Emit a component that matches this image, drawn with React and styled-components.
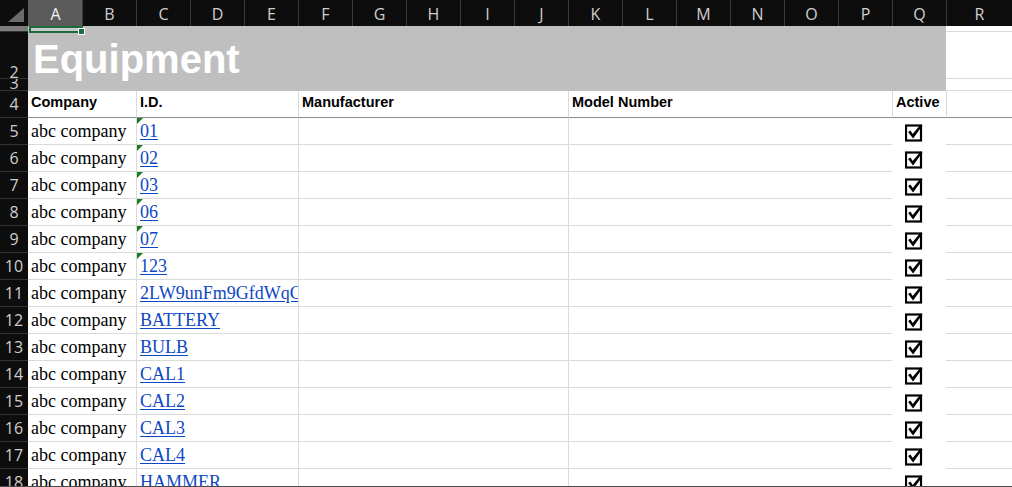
import React from 'react';
import styled, { createGlobalStyle, css } from 'styled-components';

const Global = createGlobalStyle`
  html, body { margin: 0; padding: 0; background: #ffffff; }
  body { overflow: hidden; }
`;

const COLS = ['A','B','C','D','E','F','G','H','I','J','K','L','M','N','O','P','Q','R'];

const ROWS = [
  { n: 5, id: '01', tri: true },
  { n: 6, id: '02', tri: true },
  { n: 7, id: '03', tri: true },
  { n: 8, id: '06', tri: true },
  { n: 9, id: '07', tri: true },
  { n: 10, id: '123', tri: true },
  { n: 11, id: '2LW9unFm9GfdWqCx4Tz', tri: false },
  { n: 12, id: 'BATTERY', tri: false },
  { n: 13, id: 'BULB', tri: false },
  { n: 14, id: 'CAL1', tri: false },
  { n: 15, id: 'CAL2', tri: false },
  { n: 16, id: 'CAL3', tri: false },
  { n: 17, id: 'CAL4', tri: false },
  { n: 18, id: 'HAMMER', tri: false },
];

const columns = css`
  display: grid;
  grid-template-columns: 28px repeat(17, 54px) 66px;
`;

const Sheet = styled.div`
  width: 1012px;
  height: 487px;
  box-sizing: border-box;
  border-bottom: 1px solid #4a4a4a;
  overflow: hidden;
  display: flex;
  flex-direction: column;
  background: #ffffff;
`;

/* ---------- column header bar ---------- */
const HeaderBar = styled.div`
  ${columns};
  flex: 0 0 26px;
  background: #0d0d0d;
`;

const Corner = styled.div`
  display: flex;
  align-items: flex-end;
  justify-content: flex-end;
  padding: 0 4px 4px 0;
  box-sizing: border-box;
`;

const ColHead = styled.div`
  background: ${p => (p.$active ? '#5b5b5b' : '#0d0d0d')};
  color: ${p => (p.$active ? '#f2f2f2' : '#cfcfcf')};
  border-left: 1px solid ${p => (p.$active ? '#5b5b5b' : '#3a3a3a')};
  box-sizing: border-box;
  font-family: "Open Sans", "Noto Sans", sans-serif;
  font-size: 16px;
  line-height: 24px;
  padding-top: 2px;
  text-align: center;
`;

/* ---------- row header ---------- */
const RowHead = styled.div`
  grid-column: 1;
  grid-row: ${p => p.$row || 1};
  background: ${p => (p.$active ? '#7c7c7c' : '#0d0d0d')};
  color: #cfcfcf;
  border-bottom: 1px solid #333333;
  box-sizing: border-box;
  overflow: hidden;
  display: flex;
  justify-content: center;
  align-items: flex-end;
  padding-bottom: ${p => p.$pb || 0}px;
  font-family: "Open Sans", "Noto Sans", sans-serif;
  font-size: 16px;
  line-height: 16px;
`;

const RowNum = styled.span`
  margin-bottom: ${p => p.$drop || 0}px;
`;

/* ---------- title block (rows 1-3) ---------- */
const TitleBlock = styled.div`
  ${columns};
  grid-template-rows: 6px 47px 12px;
  flex: 0 0 65px;
`;

const Band = styled.div`
  grid-column: 2 / 19;
  grid-row: 1 / 4;
  background: #bfbfbf;
  color: #ffffff;
  font-family: "Liberation Sans", Arial, sans-serif;
  font-weight: 700;
  font-size: 40px;
  line-height: 40px;
  padding: 13px 0 0 5px;
  box-sizing: border-box;
`;

const Selection = styled.div`
  grid-column: 2 / 3;
  grid-row: 1 / 2;
  margin: 0 -1px -1px 1px;
  border: 2px solid #1e6b41;
  background: #c9c9c9;
  position: relative;
  z-index: 2;
  &::after {
    content: '';
    position: absolute;
    right: -4px;
    bottom: -4px;
    width: 5px;
    height: 5px;
    background: #1e6b41;
    border: 1px solid #ffffff;
  }
`;

const Blank = styled.div`
  grid-column: 19;
  grid-row: ${p => p.$row};
  border-bottom: 1px solid #dadada;
  box-sizing: border-box;
  background: #ffffff;
`;

/* ---------- table rows ---------- */
const Row = styled.div`
  ${columns};
  flex: 0 0 27px;
  height: 27px;
`;

const HeadCell = styled.div`
  grid-column: ${p => p.$span};
  border-left: ${p => (p.$left ? '1px solid #dadada' : 'none')};
  border-bottom: 1px solid #8c8c8c;
  box-sizing: border-box;
  padding-left: 3px;
  font-family: "Liberation Sans", Arial, sans-serif;
  font-weight: 700;
  font-size: 14.5px;
  line-height: 22px;
  color: #000000;
  white-space: nowrap;
  overflow: hidden;
`;

const Cell = styled.div`
  grid-column: ${p => p.$span};
  position: relative;
  border-left: ${p => (p.$left ? '1px solid #dadada' : 'none')};
  border-bottom: 1px solid #dadada;
  box-sizing: border-box;
  padding-left: 3px;
  font-family: "Liberation Serif", "Times New Roman", serif;
  font-size: 18px;
  line-height: 26px;
  color: #000000;
  white-space: nowrap;
  overflow: hidden;
  ${p => p.$tri && css`
    &::before {
      content: '';
      position: absolute;
      top: 0;
      left: 0;
      border-top: 6px solid #1d7a24;
      border-right: 6px solid transparent;
    }
  `}
`;

const Link = styled.a`
  color: #0e47c4;
  text-decoration: underline;
  text-underline-offset: 2px;
`;

const CheckCell = styled.div`
  grid-column: 18;
  background: #ffffff;
  padding: 6px 0 0 13px;
  box-sizing: border-box;
`;

const CheckSvg = styled.svg`
  display: block;
`;

const SelectAll = () => (
  <svg width="16" height="14" viewBox="0 0 16 14">
    <polygon points="16,0 16,14 0,14" fill="#6b6b6b" />
  </svg>
);

const CheckBox = () => (
  <CheckSvg width="19" height="18" viewBox="0 0 19 18">
    <rect x="1" y="1.5" width="15" height="15" fill="#ffffff" stroke="#000000" strokeWidth="2.2" />
    <path d="M3.1 8.1 L5.5 6.6 L7.7 10.1 L15.5 0.5 L17.5 1.6 L8.1 14.4 Z" fill="#000000" />
  </CheckSvg>
);

export default function App() {
  return (
    <>
      <Global />
      <Sheet>
        <HeaderBar>
          <Corner><SelectAll /></Corner>
          {COLS.map((c, i) => (
            <ColHead key={c} $active={i === 0}>{c}</ColHead>
          ))}
        </HeaderBar>

        <TitleBlock>
          <RowHead $row={1} $active />
          <RowHead $row={2}><RowNum $drop={-2}>2</RowNum></RowHead>
          <RowHead $row={3}><RowNum $drop={-1}>3</RowNum></RowHead>
          <Band>Equipment</Band>
          <Selection />
          <Blank $row={1} />
          <Blank $row={2} />
          <Blank $row={3} />
        </TitleBlock>

        <Row>
          <RowHead $pb={5}><RowNum>4</RowNum></RowHead>
          <HeadCell $span="2 / 4">Company</HeadCell>
          <HeadCell $span="4 / 7" $left>I.D.</HeadCell>
          <HeadCell $span="7 / 12" $left>Manufacturer</HeadCell>
          <HeadCell $span="12 / 18" $left>Model Number</HeadCell>
          <HeadCell $span="18 / 19" $left>Active</HeadCell>
          <HeadCell $span="19 / 20" $left />
        </Row>

        {ROWS.map(r => (
          <Row key={r.n}>
            <RowHead $pb={5}><RowNum>{r.n}</RowNum></RowHead>
            <Cell $span="2 / 4">abc company</Cell>
            <Cell $span="4 / 7" $left $tri={r.tri}>
              <Link>{r.id}</Link>
            </Cell>
            <Cell $span="7 / 12" $left />
            <Cell $span="12 / 18" $left />
            <CheckCell><CheckBox /></CheckCell>
            <Cell $span="19 / 20" />
          </Row>
        ))}
      </Sheet>
    </>
  );
}
